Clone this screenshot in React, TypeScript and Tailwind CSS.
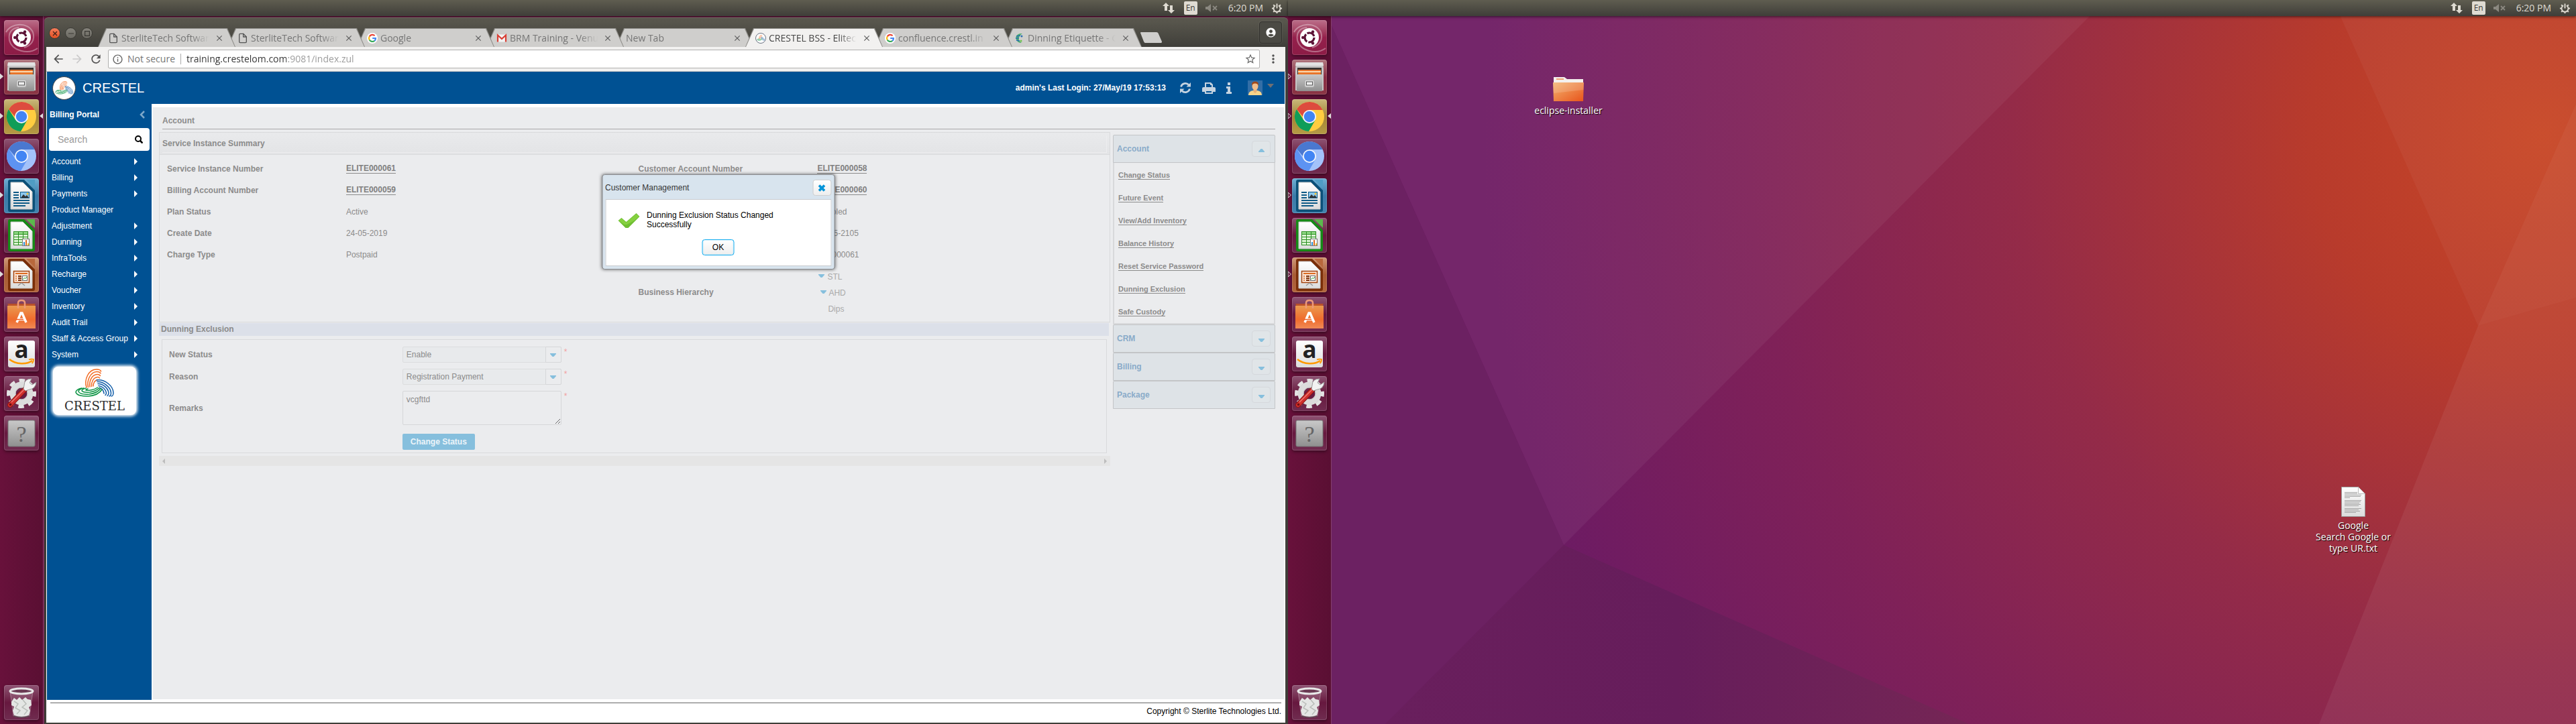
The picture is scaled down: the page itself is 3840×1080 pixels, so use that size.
import React from 'react';
import { FiFile } from 'react-icons/fi';
import {
  MdArrowBack,
  MdArrowForward,
  MdRefresh,
  MdInfoOutline,
  MdStarBorder,
  MdMoreVert,
  MdClose,
  MdAccountCircle,
} from 'react-icons/md';

const UI = "font-['Open_Sans','Noto_Sans',sans-serif]";

/* ---------- logos ---------- */

function CrestelMark({ className }: { className: string }) {
  return (
    <svg viewBox="0 0 58 42" className={className} fill="none" strokeLinecap="round" aria-hidden="true">
      <g stroke="#f26a21" strokeWidth="1.5">
        <path d="M17 28C13 16 20 1 32 1C35 1 38 2 38.500 4" />
        <path d="M19.500 27.500C17 17 23 5 32 4.500C35 4.300 37 5 38 7" />
        <path d="M22 27C20.500 18 25 9 33 8.500C35 8.400 36.500 9 37.500 10.500" />
        <path d="M24.500 26.500C24 20 27 13 33.500 12.500C35 12.400 36 13 36.500 14" />
        <path d="M27 26C27 22 29 17 34 16.500" />
      </g>
      <g stroke="#0f5ca8" strokeWidth="1.5">
        <path d="M32 17C44 15 57 26 57 36C57 39 55.500 41 54 41" />
        <path d="M33 19.500C43 19 53 28 53.500 36C53.500 38.500 52.500 40.500 51 41" />
        <path d="M34 22.500C42 22.500 49 29 50 36C50 38 49.500 39.500 48 40.500" />
        <path d="M35 25.500C41 26 45.500 31 46.500 36C46.500 37.500 46 38.500 45 39.500" />
        <path d="M36.500 28.500C40 29.500 42.500 33 43 37" />
      </g>
      <g stroke="#0c9444" strokeWidth="1.5">
        <path d="M10 29C4 30 1 33 1 35C2 40 12 41.500 20 41C30 40 37 36 40 31" />
        <path d="M13 29C8 30 5 32 5 34C7 38 15 38.500 21 38C29 37 35 34 38 29.500" />
        <path d="M16 29C12 30 10 31 10 33C12 35.500 17 35.500 22 35C28 34 33 32 36 28.500" />
        <path d="M19 30C17 30.500 15.500 31 16 32C19 33 29 31.500 33.500 28" />
      </g>
    </svg>
  );
}

function GoogleG() {
  return (
    <svg viewBox="0 0 16 16" className="size-4 shrink-0" aria-hidden="true">
      <circle cx="8" cy="8" r="8" fill="#fff" />
      <g fill="none" strokeWidth="2.2">
        <path d="M11.600 4.300A5 5 0 0 0 3.700 5.500" stroke="#ea4335" />
        <path d="M3.700 5.500A5 5 0 0 0 3.700 10.500" stroke="#fbbc05" />
        <path d="M3.700 10.500A5 5 0 0 0 11.300 11.800" stroke="#34a853" />
        <path d="M11.300 11.800A5 5 0 0 0 13 8H8.200" stroke="#4285f4" />
      </g>
    </svg>
  );
}

function GmailM() {
  return (
    <svg viewBox="0 0 16 16" className="size-4 shrink-0" aria-hidden="true">
      <rect x="1" y="2.500" width="14" height="11" rx="1" fill="#f3f3f3" />
      <path d="M2 13.500V3.500L8 9L14 3.500V13.500" fill="none" stroke="#d93f35" strokeWidth="2.200" />
    </svg>
  );
}

function CrestelFavicon() {
  return (
    <span className="flex size-4 shrink-0 items-center justify-center rounded-full border border-gray-500 bg-white">
      <CrestelMark className="w-3" />
    </span>
  );
}

function EtiquetteFavicon() {
  return (
    <svg viewBox="0 0 16 16" className="size-4 shrink-0" aria-hidden="true">
      <path d="M12 1C4 0 1 6 3 10C4 13 7 15 11 15C8 13 6 10 7 7C8 4 10 2 12 1Z" fill="#4caf6e" />
      <path d="M3 5L9 4M2 8L7 8M3 11L8 12" stroke="#2a6fb0" strokeWidth="1.500" />
      <circle cx="11" cy="5" r="1.500" fill="#2a6fb0" />
      <circle cx="10" cy="12" r="1.500" fill="#6cc04a" />
    </svg>
  );
}

/* ---------- launcher ---------- */

function LauncherDefs() {
  return (
    <svg className="absolute size-0" aria-hidden="true">
      <defs>
        <linearGradient id="metal" x1="0" y1="0" x2="0" y2="1">
          <stop offset="0" stopColor="#c9c9c9" />
          <stop offset="1" stopColor="#8f8f8f" />
        </linearGradient>
        <linearGradient id="paper" x1="0" y1="0" x2="0" y2="1">
          <stop offset="0" stopColor="#ffffff" />
          <stop offset="1" stopColor="#dcdcdc" />
        </linearGradient>
        <linearGradient id="bag" x1="0" y1="0" x2="0" y2="1">
          <stop offset="0" stopColor="#ea9a50" />
          <stop offset=".6" stopColor="#ef6c2d" />
          <stop offset="1" stopColor="#f08a55" />
        </linearGradient>
        <linearGradient id="folder" x1="0" y1="0" x2="1" y2="1">
          <stop offset="0" stopColor="#f3b470" />
          <stop offset="1" stopColor="#e8541b" />
        </linearGradient>
      </defs>
    </svg>
  );
}

function DashIcon() {
  return (
    <g>
      <path d="M3 18C10 4 36 2 43 18C47 30 40 38 30 41" fill="none" stroke="#fff" strokeOpacity=".35" strokeWidth="2" />
      <path d="M50 42C36 52 12 46 8 30C6 18 12 12 22 11" fill="none" stroke="#fff" strokeOpacity=".35" strokeWidth="2" />
      <circle cx="26" cy="26" r="14" fill="#fff" />
      <circle cx="26" cy="26" r="7" fill="none" stroke="#5b1236" strokeWidth="3.200" strokeDasharray="12.600 2" />
      <g fill="#5b1236">
        <circle cx="16.200" cy="26" r="2.200" />
        <circle cx="31" cy="17.500" r="2.200" />
        <circle cx="31" cy="34.500" r="2.200" />
      </g>
    </g>
  );
}

function FilesIcon() {
  return (
    <g>
      <path d="M6 4H46L47 14V46H5V14Z" fill="#c6c6c6" />
      <path d="M6 4H46L47 9H5Z" fill="#e2e2e2" />
      <rect x="8" y="12" width="36" height="10" fill="#3a3431" />
      <rect x="9" y="15" width="34" height="8" fill="#e8762c" />
      <rect x="9" y="17" width="34" height="2" fill="#fbd9b0" />
      <path d="M7 22H45V47H7Z" fill="url(#metal)" />
      <rect x="19" y="30" width="14" height="11" rx="2" fill="#d9d9d9" stroke="#aaa" />
      <rect x="21.500" y="33" width="9" height="5" fill="#eee" stroke="#555" />
    </g>
  );
}

function ChromeIcon({ blue }: { blue?: boolean }) {
  const [a, b, c] = blue ? ['#4a78d0', '#5d93f2', '#a3c2fa'] : ['#dd4b3e', '#0f9d58', '#ffcd40'];
  return (
    <g>
      <circle cx="26" cy="26" r="22" fill={c} />
      <path d="M45.700 16H26L17 27L7 15A22 22 0 0 1 45.700 16Z" fill={a} />
      <path d="M6.900 15A22 22 0 0 0 25 48L34.700 31L26 36L17.300 31Z" fill={b} />
      <circle cx="26" cy="26" r="10" fill="#f3f6fc" />
      <circle cx="26" cy="26" r="8.200" fill="#4285f4" />
    </g>
  );
}

function DocShell({ dark, light, children }: { dark: string; light: string; children: React.ReactNode }) {
  return (
    <g>
      <path d="M9 2H30L46 18V47Q46 50 43 50H9Q6 50 6 47V5Q6 2 9 2Z" fill={dark} />
      <path d="M33 2H46V15Z" fill={light} />
      <path d="M10 6H28L42 20V46H10Z" fill="url(#paper)" stroke="#c8c8c8" />
      {children}
    </g>
  );
}

function WriterIcon() {
  return (
    <DocShell dark="#0b5078" light="#4f9cc4">
      <path d="M14 21H22M14 25H22M14 29H22M14 33H38M14 37H38M14 41H32" stroke="#0e5a86" strokeWidth="2" />
      <rect x="24.500" y="20.500" width="13" height="9" fill="#8cc8ee" stroke="#0e5a86" />
      <path d="M25 29L29 24L32 27L34 25L37 29Z" fill="#333" />
      <circle cx="35" cy="23" r="1.500" fill="#f2c230" />
    </DocShell>
  );
}

function CalcIcon() {
  return (
    <DocShell dark="#178a17" light="#5bb94c">
      <rect x="14" y="20" width="22" height="21" fill="#2c8f22" />
      <g fill="#ddf5d4">
        <path d="M15 21H21V24H15ZM22 21H28V24H22ZM29 21H35V24H29Z" fill="#8fd884" />
        <path d="M15 25H21V28H15ZM22 25H28V28H22ZM29 25H35V28H29ZM15 29H21V32H15ZM22 29H28V32H22ZM29 29H35V32H29ZM15 33H21V36H15ZM22 33H28V36H22ZM15 37H21V40H15ZM22 37H28V40H22Z" />
      </g>
      <rect x="27.500" y="31.500" width="10" height="10" fill="#fff" stroke="#777" />
      <path d="M29 36H31V41H29Z" fill="#2a8fd4" />
      <path d="M32 33H34V41H32Z" fill="#dc6b20" />
      <path d="M35 38H37V41H35Z" fill="#e9c02c" />
    </DocShell>
  );
}

function ImpressIcon() {
  return (
    <DocShell dark="#7a2e08" light="#b8683c">
      <rect x="14.500" y="20.500" width="23" height="17" fill="#fbe6d8" stroke="#a3430e" strokeWidth="1.500" />
      <path d="M17 24H35" stroke="#dc6b20" strokeWidth="2" />
      <path d="M17 28H19M17 31H19M17 34H19" stroke="#dc6b20" strokeWidth="1.500" />
      <path d="M21 28H26M21 31H26M21 34H26" stroke="#7a2e08" strokeWidth="1.800" />
      <rect x="27.500" y="27.500" width="7" height="7" fill="#fff" stroke="#666" />
      <path d="M28.500 33L30.500 30.500L32 31.500L34 29" fill="none" stroke="#2fa32f" />
      <path d="M26 38L21 42M26 38L31 42" stroke="#999" strokeWidth="1.500" />
    </DocShell>
  );
}

function SoftwareIcon() {
  return (
    <g>
      <path d="M5 10H47L45 14H7Z" fill="#b9512a" />
      <path d="M5 13H47V47H5Z" fill="url(#bag)" />
      <path d="M21 17V9Q21 5 26 5Q31 5 31 9V17" fill="none" stroke="#ee9a78" strokeWidth="2.500" />
      <path d="M19 38L25 24H27L33 38M20 33.500H32" fill="none" stroke="#fff" strokeWidth="3.500" />
      <path d="M18 33.500H29" stroke="#ef5a1d" strokeWidth="1.500" />
    </g>
  );
}

function AmazonIcon() {
  return (
    <g>
      <rect x="6" y="6" width="40" height="40" rx="3" fill="url(#paper)" />
      <text
        x="26"
        y="32"
        textAnchor="middle"
        fontSize="35"
        fontWeight="bold"
        fill="#222"
        className="font-['Open_Sans',sans-serif]"
      >
        a
      </text>
      <path d="M8 34C18 42 34 42 42 36" fill="none" stroke="#ff9900" strokeWidth="2.400" />
      <path d="M37 34.500Q41 33 44 34Q44 38 41.500 40" fill="none" stroke="#ff9900" strokeWidth="1.800" />
    </g>
  );
}

function SettingsIcon() {
  return (
    <g>
      <circle cx="26" cy="26" r="19.500" fill="none" stroke="#e3e3e3" strokeWidth="5" strokeDasharray="8.500 6.810" strokeDashoffset="4" />
      <circle cx="26" cy="26" r="13" fill="none" stroke="#dcdcdc" strokeWidth="9" />
      <circle cx="26" cy="26" r="9" fill="none" stroke="#bdbdbd" />
      <path d="M9 43L31 20" stroke="#8d1515" strokeWidth="8" strokeLinecap="round" />
      <path d="M9 43L31 20" stroke="#cf2f2c" strokeWidth="6" strokeLinecap="round" />
      <path d="M11 39L30 20" stroke="#ef7b74" strokeWidth="1.500" />
      <circle cx="9.500" cy="42.500" r="1.800" fill="#6e0f0f" />
      <path d="M29 19L32 22L38 20Q47 19 48 9L42 13L38 10L41 4Q30 4 30 14Z" fill="#f2f2f2" stroke="#9a9a9a" />
    </g>
  );
}

function HelpIcon() {
  return (
    <g>
      <rect x="6" y="7" width="40" height="39" rx="2" fill="url(#metal)" stroke="#777" />
      <text x="26" y="39" textAnchor="middle" fontSize="34" fill="#666" className="font-['Liberation_Serif',serif]">
        ?
      </text>
    </g>
  );
}

function TrashIcon() {
  return (
    <g>
      <path d="M9 9L14 46Q26 50 38 46L43 9Z" fill="#fff" fillOpacity=".15" stroke="#fff" strokeOpacity=".3" />
      <path d="M11 25L15 19L19 22L23 18L27 22L32 18L35 21L40 22L41 30L37 33L39 38L37 45Q26 49 15 45L13 38L15 32L11 30Z" fill="#e4e6e4" />
      <path d="M15 24L21 28L17 34L24 38L19 43M28 22L33 28L27 33L35 38L30 44" fill="none" stroke="#b9bdb9" strokeWidth="1.500" />
      <ellipse cx="26" cy="9" rx="17" ry="4" fill="#6b3a53" stroke="#e8e8e8" strokeWidth="3" />
      <path d="M14 46Q26 50 38 46" fill="none" stroke="#4a4a4a" />
    </g>
  );
}

type App = { name: string; icon: React.ReactNode; tile: string; running?: boolean; active?: boolean };

const PLAIN = 'bg-linear-to-b from-[#8e5474] via-[#67183f] to-[#702c50]';

const APPS: App[] = [
  { name: 'Search your computer', icon: <DashIcon />, tile: 'bg-linear-to-b from-[#bb6e8a] via-[#95204c] to-[#8c1c46]' },
  { name: 'Files', icon: <FilesIcon />, tile: 'bg-linear-to-b from-[#b07880] via-[#8a2c44] to-[#8a3544]', running: true },
  { name: 'Google Chrome', icon: <ChromeIcon />, tile: 'bg-linear-to-b from-[#c9b87a] via-[#a38634] to-[#b69a45]', running: true, active: true },
  { name: 'Chromium', icon: <ChromeIcon blue />, tile: PLAIN },
  { name: 'LibreOffice Writer', icon: <WriterIcon />, tile: 'bg-linear-to-b from-[#6fb0d4] via-[#3b7ba8] to-[#4383af]', running: true },
  { name: 'LibreOffice Calc', icon: <CalcIcon />, tile: PLAIN },
  { name: 'LibreOffice Impress', icon: <ImpressIcon />, tile: 'bg-linear-to-b from-[#d09a78] via-[#a85c34] to-[#b2663c]', running: true },
  { name: 'Ubuntu Software', icon: <SoftwareIcon />, tile: PLAIN },
  { name: 'Amazon', icon: <AmazonIcon />, tile: PLAIN },
  { name: 'System Settings', icon: <SettingsIcon />, tile: PLAIN },
  { name: 'Help', icon: <HelpIcon />, tile: PLAIN },
];

function Tile({ app, hollow }: { app: App; hollow?: boolean }) {
  return (
    <div className="relative px-1.5">
      <button
        type="button"
        aria-label={app.name}
        className={`block size-[52px] rounded-sm shadow-[0_2px_4px_rgba(0,0,0,0.4)] ring-1 ring-white/15 ring-inset ${app.tile}`}
      >
        <svg viewBox="0 0 52 52" className="size-full overflow-visible">
          {app.icon}
        </svg>
      </button>
      {app.running && (
        <svg viewBox="0 0 6 10" className="absolute top-5 left-0 h-2.5 w-1.5" aria-hidden="true">
          <path d="M0 1L4.500 5L0 9Z" fill={hollow ? 'none' : '#ddd'} stroke="#ddd" />
        </svg>
      )}
      {app.active && (
        <svg viewBox="0 0 6 10" className="absolute top-5 right-0 h-2.5 w-1.5" aria-hidden="true">
          <path d="M6 1L1 5L6 9Z" fill="#ddd" />
        </svg>
      )}
    </div>
  );
}

function Launcher({ hollow }: { hollow?: boolean }) {
  return (
    <nav
      aria-label="Launcher"
      className="flex w-[65px] shrink-0 flex-col justify-between border-r border-[#84406c] bg-linear-to-r from-[#68113b] to-[#5a0f33] pt-1.5 pb-1.5"
    >
      <div className="flex flex-col gap-[7px]">
        {APPS.map((a) => (
          <Tile key={a.name} app={a} hollow={hollow} />
        ))}
      </div>
      <Tile app={{ name: 'Trash', icon: <TrashIcon />, tile: PLAIN }} />
    </nav>
  );
}

function Panel() {
  return (
    <header className="relative z-10 flex h-6 shrink-0 items-center justify-end bg-linear-to-b from-[#5f5d50] to-[#3f3e39] pr-2 text-[#dfdbd2] shadow-[0_1px_4px_rgba(0,0,0,0.6)]">
      <svg viewBox="0 0 18 18" className="mr-3.5 size-[18px]" fill="currentColor" aria-label="Network">
        <path d="M5 1L10 6H7V13H3V6H0Z" />
        <path d="M13 17L8 12H11V5H15V12H18Z" />
      </svg>
      <span className={`mr-3 flex h-5 w-5 items-center justify-center rounded-xs bg-[#dfdbd2] text-xs text-[#3c3b37] ${UI}`}>En</span>
      <svg viewBox="0 0 18 12" className="mr-4 h-3 w-[18px] text-[#8b8880]" fill="currentColor" aria-label="Muted">
        <path d="M0 4H3L8 0V12L3 8H0Z" />
        <path d="M11 3L17 9M17 3L11 9" stroke="currentColor" strokeWidth="1.800" />
      </svg>
      <time className={`mr-3 text-sm leading-6 ${UI}`}>6:20 PM</time>
      <svg viewBox="0 0 18 18" className="size-[17px]" fill="none" stroke="currentColor" aria-label="Session">
        <path d="M6.500 4.500A5.300 5.300 0 1 0 11.500 4.500" strokeWidth="2" />
        <path d="M9 1.500V9" strokeWidth="2" />
        <path d="M1 9H3.500M14.500 9H17M3.300 3.300L5 5M14.700 3.300L13 5M3.300 14.700L5 13M14.700 14.700L13 13M9 14.500V17" strokeWidth="2" />
      </svg>
    </header>
  );
}

/* ---------- browser ---------- */

const TABS = [
  { title: 'SterliteTech Software', icon: <FiFile className="size-4 shrink-0 text-[#555]" /> },
  { title: 'SterliteTech Software', icon: <FiFile className="size-4 shrink-0 text-[#555]" /> },
  { title: 'Google', icon: <GoogleG /> },
  { title: 'BRM Training - Venue', icon: <GmailM /> },
  { title: 'New Tab', icon: null },
  { title: 'CRESTEL BSS - Elitecore', icon: <CrestelFavicon />, active: true },
  { title: 'confluence.crestl.in', icon: <GoogleG /> },
  { title: 'Dinning Etiquette - G', icon: <EtiquetteFavicon /> },
];

const SLANT = '[clip-path:polygon(12px_0,calc(100%-12px)_0,100%_100%,0_100%)]';
const STACK = ['z-[8]', 'z-[7]', 'z-[6]', 'z-[5]', 'z-[4]', 'z-[9]', 'z-[2]', 'z-[1]'];

function TabStrip() {
  return (
    <div className="flex h-11 items-end pl-[7px]">
      <WindowButtons />
      <div role="tablist" className="relative isolate flex">
        {TABS.map((t, i) => (
          <div key={i} className={`relative -mr-3 h-7 w-[205px] bg-[#8d8c88] ${SLANT} ${STACK[i]}`}>
            <div
              className={`absolute inset-x-px top-px bottom-0 flex items-center pr-4 pl-3.5 ${SLANT} ${
                t.active ? 'bg-[#f2f1f0]' : 'bg-[#cfcecc]'
              }`}
            >
              {t.icon}
              <button
                type="button"
                role="tab"
                aria-selected={!!t.active}
                className={`min-w-0 flex-1 overflow-hidden text-left text-sm whitespace-nowrap [mask-image:linear-gradient(90deg,#000_80%,transparent)] ${
                  t.icon ? 'ml-1' : ''
                } ${t.active ? 'text-[#454545]' : 'text-[#757575]'} ${UI}`}
              >
                {t.title}
              </button>
              <button type="button" aria-label={`Close ${t.title}`} className="ml-2 text-[#5c5c5c]">
                <MdClose className="size-3.5" />
              </button>
            </div>
          </div>
        ))}
      </div>
      <button type="button" aria-label="New tab" className="mb-1.5 ml-2.5 h-4">
        <svg viewBox="0 0 32 16" className="h-4 w-8">
          <path d="M0 1Q0 0 1 0H24Q26 0 26.500 1.500L32 14Q32 16 31 16H7Q6 16 5 14Z" fill="#cfcecc" />
        </svg>
      </button>
      <button
        type="button"
        aria-label="Profile"
        className="mr-[9px] mb-[5px] ml-auto flex h-[33px] w-[34px] items-center justify-center rounded-sm border border-[#33322e] bg-[#4b4a44] text-white shadow-[0_0_0_1px_rgba(255,255,255,0.06)]"
      >
        <MdAccountCircle className="size-[17px]" />
      </button>
    </div>
  );
}

function WindowButtons() {
  const base = 'flex size-[17px] items-center justify-center rounded-full border border-[#3a3934]';
  return (
    <div className="mb-3 flex w-[73px] shrink-0 gap-[7px]">
      <button type="button" aria-label="Close window" className={`${base} bg-linear-to-b from-[#f47d5a] to-[#e2501f]`}>
        <svg viewBox="0 0 8 8" className="size-2" stroke="#3a2018" strokeWidth="1.200">
          <path d="M1 1L7 7M7 1L1 7" />
        </svg>
      </button>
      <button type="button" aria-label="Minimize" className={`${base} bg-linear-to-b from-[#85837b] to-[#6b6962]`}>
        <svg viewBox="0 0 8 8" className="size-2" stroke="#3a3934" strokeWidth="1">
          <path d="M0 4H8" />
        </svg>
      </button>
      <button type="button" aria-label="Maximize" className={`${base} bg-linear-to-b from-[#85837b] to-[#6b6962]`}>
        <svg viewBox="0 0 8 8" className="size-2" stroke="#3a3934" strokeWidth="1.200" fill="none">
          <path d="M.6 .6H7.400V7.400H.6Z" />
        </svg>
      </button>
    </div>
  );
}

function Toolbar() {
  return (
    <div className={`flex h-[37px] items-center border-b border-[#c4c4c4] bg-[#f2f1f0] px-2 text-sm ${UI}`}>
      <button type="button" aria-label="Back" className="text-[#505050]">
        <MdArrowBack className="size-5" />
      </button>
      <button type="button" aria-label="Forward" className="ml-2 text-[#cbcaca]">
        <MdArrowForward className="size-5" />
      </button>
      <button type="button" aria-label="Reload" className="ml-2 text-[#505050]">
        <MdRefresh className="size-5" />
      </button>
      <div className="ml-2 flex h-7 flex-1 items-center rounded-xs border border-[#b0afae] bg-white px-1">
        <MdInfoOutline className="ml-px size-[17px] text-[#666]" />
        <span className="ml-1.5 text-[#757575]">Not secure</span>
        <span className="mx-2 h-4 w-px bg-[#aaa]" />
        <input
          aria-label="Address"
          defaultValue="training.crestelom.com:9081/index.zul"
          className="min-w-0 flex-1 bg-[linear-gradient(90deg,#333_149px,#999_149px)] bg-clip-text text-transparent outline-none"
        />
        <button type="button" aria-label="Bookmark" className="text-[#666]">
          <MdStarBorder className="size-[18px]" />
        </button>
      </div>
      <button type="button" aria-label="Menu" className="ml-2.5 text-[#505050]">
        <MdMoreVert className="size-5" />
      </button>
    </div>
  );
}

/* ---------- web application ---------- */

function AppHeader() {
  return (
    <div className="flex h-12 items-center bg-[#005193] pl-2 text-white">
      <span className="flex size-[35px] items-center justify-center rounded-full border border-[#444] bg-white">
        <CrestelMark className="w-[27px]" />
      </span>
      <span className="ml-2.5 text-xl">CRESTEL</span>
      <span className="ml-auto text-xs font-bold">admin's Last Login: 27/May/19 17:53:13</span>
      <button type="button" aria-label="Refresh" className="ml-5 text-[#c5d3e0]">
        <svg viewBox="0 0 18 18" className="size-[18px]" fill="none" stroke="currentColor" strokeWidth="2.800">
          <path d="M2.500 7.500A6.800 6.800 0 0 1 14 4.500" />
          <path d="M15.500 10.500A6.800 6.800 0 0 1 4 13.500" />
          <path d="M17 1V7.500H10.500ZM1 17V10.500H7.500Z" fill="currentColor" stroke="none" />
        </svg>
      </button>
      <button type="button" aria-label="Print" className="ml-4 text-[#c5d3e0]">
        <svg viewBox="0 0 20 18" className="h-[18px] w-5" fill="currentColor">
          <path d="M4 9V1H13L16 4V9H14V5H12V3H6V9Z" />
          <path d="M0 10Q0 8 2 8H18Q20 8 20 10V15H16V12H4V15H0Z" />
          <path d="M4 12H16V18H4ZM6 14V16H14V14Z" fillRule="evenodd" />
        </svg>
      </button>
      <button type="button" aria-label="Information" className="ml-4 text-[#c5d3e0]">
        <svg viewBox="0 0 8 17" className="h-[17px] w-2" fill="currentColor">
          <path d="M2 0H6V4H2ZM0 6H6V14H8V17H0V14H2V9H0Z" />
        </svg>
      </button>
      <button type="button" aria-label="User" className="ml-6 flex items-center">
        <svg viewBox="0 0 22 22" className="size-[22px]">
          <rect width="22" height="22" fill="#336ea6" />
          <path d="M1 22Q1 16 8 15H14Q21 16 21 22Z" fill="#f7d58a" />
          <path d="M8.500 12H13.500V17L11 19L8.500 17Z" fill="#eab077" />
          <ellipse cx="11" cy="8.500" rx="4.500" ry="6" fill="#f2be8a" />
          <path d="M6 8Q5 1.500 11 1.500Q17 1.500 16 8Q15 4.500 11 4.500Q7 4.500 6 8Z" fill="#a04a1c" />
        </svg>
        <svg viewBox="0 0 10 6" className="mr-4 mb-1.5 ml-[7px] h-1.5 w-2.5">
          <path d="M0 0H10L5 6Z" fill="#6f6f73" />
        </svg>
      </button>
    </div>
  );
}

const MENU = [
  'Account',
  'Billing',
  'Payments',
  'Product Manager',
  'Adjustment',
  'Dunning',
  'InfraTools',
  'Recharge',
  'Voucher',
  'Inventory',
  'Audit Trail',
  'Staff & Access Group',
  'System',
];

function Sidebar() {
  return (
    <aside className="w-[156px] shrink-0 bg-[#005193] text-xs text-white">
      <div className="flex h-8 items-center justify-between pr-2.5 pl-1 font-bold">
        Billing Portal
        <button type="button" aria-label="Collapse menu">
          <svg viewBox="0 0 8 12" className="h-3 w-2" fill="none" stroke="#7ea8c9" strokeWidth="2.500">
            <path d="M7 1L2 6L7 11" />
          </svg>
        </button>
      </div>
      <label className="mx-[3px] mt-1 flex h-[34px] items-center rounded-sm bg-white pr-2.5 pl-[13px]">
        <input aria-label="Search" placeholder="Search" className="w-full min-w-0 text-sm outline-none placeholder:text-[#999]" />
        <svg viewBox="0 0 12 12" className="size-3 shrink-0" fill="none" stroke="#000" strokeWidth="2" aria-hidden="true">
          <circle cx="5" cy="5" r="4" />
          <path d="M8 8L11.500 11.500" strokeWidth="2.500" />
        </svg>
      </label>
      <ul className="mt-1">
        {MENU.map((m) => (
          <li key={m}>
            <a href="#" className="flex h-6 items-center justify-between pr-[21px] pl-[7px] whitespace-nowrap">
              {m}
              {m !== 'Product Manager' && (
                <svg viewBox="0 0 5 10" className="h-2.5 w-[5px] shrink-0" aria-hidden="true">
                  <path d="M0 0L5 5L0 10Z" fill="#fff" />
                </svg>
              )}
            </a>
          </li>
        ))}
      </ul>
      <div className="mt-1.5 ml-[9px] flex h-[72px] w-[124px] flex-col items-center rounded-lg bg-white pt-[3px] shadow-[0_0_4px_2px_#fff]">
        <CrestelMark className="h-[42px] w-[58px]" />
        <span className="mt-1 font-['DejaVu_Serif',serif] text-lg leading-5 text-[#2b2b2b]">CRESTEL</span>
      </div>
    </aside>
  );
}

const ROWS: { l: string; v: string; l2?: string; v2: string; link?: boolean }[] = [
  { l: 'Service Instance Number', v: 'ELITE000061', l2: 'Customer Account Number', v2: 'ELITE000058', link: true },
  { l: 'Billing Account Number', v: 'ELITE000059', v2: 'ELITE000060', link: true },
  { l: 'Plan Status', v: 'Active', v2: 'Enabled' },
  { l: 'Create Date', v: '24-05-2019', v2: '24-05-2105' },
  { l: 'Charge Type', v: 'Postpaid', v2: 'elite000061' },
];

function Value({ text, link }: { text: string; link?: boolean }) {
  return link ? (
    <a href="#" className="border-b border-[#8b8b8b] leading-[13px] font-bold text-[#808080]">
      {text}
    </a>
  ) : (
    <>{text}</>
  );
}

function Down({ className }: { className: string }) {
  return (
    <svg viewBox="0 0 9 5" className={className} aria-hidden="true">
      <path d="M0 0H9V1L5.500 5H3.500L0 1Z" fill="#86bfdd" />
    </svg>
  );
}

function Summary() {
  return (
    <section className="border border-[#d9dadc]">
      <h2 className="h-[33px] border-b border-[#d9dadc] bg-linear-to-b from-[#e9eaec] to-[#e3e4e6] pt-1 pr-1 pl-1">
        <span className="block h-[26px] border-r border-b border-[#ededef] leading-6 font-bold">Service Instance Summary</span>
      </h2>
      <dl className="grid grid-cols-[19fr_31fr_19fr_31fr] pt-[5px] pl-[11px]">
        {ROWS.map((r) => (
          <React.Fragment key={r.l}>
            <dt className="flex h-8 items-center font-bold">{r.l}</dt>
            <dd className="flex h-8 items-center">
              <Value text={r.v} link={r.link} />
            </dd>
            <dt className="flex h-8 items-center font-bold">{r.l2}</dt>
            <dd className="flex h-8 items-center">
              <Value text={r.v2} link={r.link} />
            </dd>
          </React.Fragment>
        ))}
        <dt className="col-start-3 flex h-20 items-center font-bold">Business Hierarchy</dt>
        <dd className="pt-[5px] pb-[7px] leading-6 text-[#a9a9a9]">
          <div className="flex items-center gap-1 pl-0.5">
            <Down className="mb-1 h-[5px] w-[9px]" />
            STL
          </div>
          <div className="flex items-center gap-[3px] pl-[5px]">
            <Down className="mb-1 h-[5px] w-[9px]" />
            AHD
          </div>
          <div className="pl-4">Dips</div>
        </dd>
      </dl>
    </section>
  );
}

function Required() {
  return <span className="ml-1 text-[#f2a0a0]">*</span>;
}

function Picker({ id, value }: { id: string; value: string }) {
  return (
    <div className="relative flex w-[237px]">
      <select id={id} defaultValue={value} className="h-6 w-full appearance-none rounded-xs border border-[#dcddde] bg-[#e8eaec] pr-7 pl-[5px]">
        <option>{value}</option>
      </select>
      <span className="pointer-events-none absolute inset-y-0 right-0 flex w-6 items-center justify-center rounded-r-xs border border-[#d6d7d9] bg-[#ebecee]">
        <Down className="h-[5px] w-[9px]" />
      </span>
    </div>
  );
}

function ExclusionForm() {
  return (
    <section className="mt-px">
      <h2 className="mr-0.5 h-[19px] bg-[#dce0e9] pl-[3px] leading-[19px] font-bold">Dunning Exclusion</h2>
      <form className="mt-[5px] mr-[5px] ml-1 border border-[#d9dadc] pt-2.5 pb-1 pl-2.5" onSubmit={(e) => e.preventDefault()}>
        <div className="grid grid-cols-[249fr_751fr] gap-y-[9px]">
          <label htmlFor="status" className="pt-1 leading-4 font-bold">
            New Status
          </label>
          <div className="flex">
            <Picker id="status" value="Enable" />
            <Required />
          </div>
          <label htmlFor="reason" className="pt-1 leading-4 font-bold">
            Reason
          </label>
          <div className="flex">
            <Picker id="reason" value="Registration Payment" />
            <Required />
          </div>
          <label htmlFor="remarks" className="self-center leading-4 font-bold">
            Remarks
          </label>
          <div className="flex">
            <textarea id="remarks" defaultValue="vcgfttd" className="h-[51px] w-[237px] rounded-xs border border-[#d6d7d9] px-[5px] pt-1 leading-4" />
            <Required />
          </div>
          <button type="submit" className="col-start-2 mt-1 h-6 w-[108px] rounded-xs bg-[#86bfdd] font-bold text-[#ecf4f9]">
            Change Status
          </button>
        </div>
      </form>
      <div className="mt-1 flex h-[15px] items-center justify-between bg-[#e5e5e5] px-[5px]">
        <svg viewBox="0 0 4 8" className="h-2 w-1" aria-hidden="true">
          <path d="M4 0L0 4L4 8Z" fill="#bdbdbd" />
        </svg>
        <svg viewBox="0 0 4 8" className="h-2 w-1" aria-hidden="true">
          <path d="M0 0L4 4L0 8Z" fill="#bdbdbd" />
        </svg>
      </div>
    </section>
  );
}

const LINKS = ['Change Status', 'Future Event', 'View/Add Inventory', 'Balance History', 'Reset Service Password', 'Dunning Exclusion', 'Safe Custody'];

function AccordionHead({ title, open }: { title: string; open?: boolean }) {
  return (
    <h3 className="flex h-[42px] items-center justify-between rounded-t-xs border border-[#c3c5c7] bg-[#dee3e7] pr-1.5 pl-[5px] font-bold text-[#8aabc9]">
      {title}
      <button type="button" aria-label={`Toggle ${title}`} className="flex h-6 w-7 items-center justify-center rounded-sm border border-[#d5d8dc] bg-[#e0e5e8] pt-1">
        <Down className={open ? 'h-[5px] w-[9px] rotate-180' : 'h-[5px] w-[9px]'} />
      </button>
    </h3>
  );
}

function Accordion() {
  return (
    <aside className="mt-1 w-[242px] shrink-0">
      <AccordionHead title="Account" open />
      <ul className="border-2 border-t-0 border-[#d8d9db] pt-px pl-1.5">
        {LINKS.map((l) => (
          <li key={l} className="flex h-[34px] items-center text-[11px] font-bold">
            <a href="#" className="border-b border-[#8b8b8b] leading-3">
              {l}
            </a>
          </li>
        ))}
      </ul>
      <AccordionHead title="CRM" />
      <AccordionHead title="Billing" />
      <AccordionHead title="Package" />
    </aside>
  );
}

function Dialog() {
  return (
    <div
      role="dialog"
      aria-labelledby="dialog-title"
      className="absolute top-[105px] left-1/2 w-[347px] -translate-x-1/2 rounded-sm border border-[#8a8c90] bg-[#d8e4ee] px-1 pb-1 shadow-[0_0_5px_rgba(0,0,0,0.6)]"
    >
      <div className="flex h-9 items-center justify-between pt-0.5">
        <h2 id="dialog-title" className="text-[#363636]">
          Customer Management
        </h2>
        <button type="button" aria-label="Close" className="flex h-6 w-7 items-center justify-center rounded-sm border border-[#cfcfcf] bg-linear-to-b from-white to-[#eee]">
          <svg viewBox="0 0 11 11" className="size-[11px]" stroke="#0093d8" strokeWidth="3.800">
            <path d="M1.500 1.500L9.500 9.500M9.500 1.500L1.500 9.500" />
          </svg>
        </button>
      </div>
      <div className="border border-[#c9ccd0] bg-white px-4 pt-4 pb-[15px] text-black">
        <div className="flex items-center">
          <svg viewBox="0 0 32 22" className="mt-0.5 ml-0.5 h-[22px] w-8" aria-hidden="true">
            <path d="M0 11L5 7L12 13L27 0L32 5L15 22H11Z" fill="#6fbe33" />
            <path d="M1 11L5 8L12 14L27 1L31 5L24 11L13 17L9 17Z" fill="#8fd844" fillOpacity=".7" />
          </svg>
          <p className="ml-[11px] w-52 leading-[14px]">Dunning Exclusion Status Changed Successfully</p>
        </div>
        <button
          type="button"
          className="mx-auto mt-[15px] block h-6 w-12 rounded-sm border border-[#14adf0] bg-linear-to-b from-white to-[#eee] shadow-[inset_0_0_2px_#9fdcf8]"
        >
          OK
        </button>
      </div>
    </div>
  );
}

function BrowserWindow() {
  return (
    <section
      aria-label="CRESTEL BSS"
      className="mt-0.5 ml-px flex min-w-0 flex-1 flex-col rounded-t-md border-t border-[#86847a] bg-linear-to-b from-[#5b594f] to-[#3f3e39] to-[44px]"
    >
      <div className="-mt-px">
        <TabStrip />
      </div>
      <div className="mr-1 mb-0.5 ml-[3px] flex flex-1 flex-col bg-white">
        <Toolbar />
        <div className="flex flex-1 flex-col px-px font-['Liberation_Sans',Arial,sans-serif]">
          <AppHeader />
          <div className="flex flex-1">
            <Sidebar />
            <main className="relative flex-1 pt-[5px] pr-px pb-px pl-0.5 text-xs text-[#8b8b8b]">
              <div className="h-full bg-[#ebecee] pr-[13px] pl-[9px]">
                <h1 className="ml-[5px] h-[33px] border-b border-[#a8a8a8] pt-2 leading-6 font-bold">Account</h1>
                <div className="mt-1 flex gap-1">
                  <div className="min-w-0 flex-1">
                    <Summary />
                    <ExclusionForm />
                  </div>
                  <Accordion />
                </div>
              </div>
              <Dialog />
            </main>
          </div>
          <footer className="mt-1 mr-[5px] ml-[5px] h-[30px] border-t border-[#666] pt-0.5 text-right text-xs leading-5 text-black">
            Copyright © Sterlite Technologies Ltd.
          </footer>
        </div>
      </div>
    </section>
  );
}

/* ---------- desktop ---------- */

function Wallpaper() {
  return (
    <svg viewBox="0 0 1920 1080" preserveAspectRatio="none" className="absolute inset-0 size-full" aria-hidden="true">
      <defs>
        <radialGradient id="glow" gradientUnits="userSpaceOnUse" cx="1870" cy="200" r="1580">
          <stop offset="0" stopColor="#c84726" />
          <stop offset=".22" stopColor="#b83b2c" />
          <stop offset=".5" stopColor="#942b48" />
          <stop offset=".75" stopColor="#7f2158" />
          <stop offset="1" stopColor="#6d1b63" />
        </radialGradient>
        <linearGradient id="floor" x1="0" y1="0" x2="1" y2="0">
          <stop offset="0" stopColor="#691f5d" />
          <stop offset=".5" stopColor="#661d5b" />
          <stop offset="1" stopColor="#752655" />
        </linearGradient>
      </defs>
      <rect width="1920" height="1080" fill="url(#glow)" />
      <path d="M48 0H1219L411 813Z" fill="#fff" fillOpacity=".05" />
      <path d="M0 0H48L411 813L145 1080H0Z" fill="#6c2162" />
      <path d="M145 1080L411 813L1015 1080Z" fill="url(#floor)" />
      <path d="M1558 0H1920V155L1774 486Z" fill="#fff" fillOpacity=".04" />
      <path d="M1920 155V444L1774 486Z" fill="#fff" fillOpacity=".08" />
      <path d="M1774 486L1920 444V1080H1537Z" fill="#fff" fillOpacity=".06" />
    </svg>
  );
}

const ICON_LABEL = `text-center text-sm leading-[17px] text-white [text-shadow:1px_1px_1px_#000] ${UI}`;

export default function App() {
  return (
    <div className="flex min-h-screen">
      <LauncherDefs />
      <div className="flex min-w-0 flex-1 flex-col bg-[#6d1b44]">
        <Panel />
        <div className="flex flex-1">
          <Launcher />
          <BrowserWindow />
        </div>
      </div>
      <div className="relative flex min-w-0 flex-1 flex-col">
        <Wallpaper />
        <Panel />
        <div className="relative flex flex-1">
          <Launcher hollow />
          <div className="relative flex-1">
            <figure className="absolute top-[90px] left-[289px] flex w-32 flex-col items-center">
              <svg viewBox="0 0 46 38" className="h-[38px] w-[46px]" aria-hidden="true">
                <path d="M1 1H17L21 4H45V12H1Z" fill="#f4f1ee" />
                <path d="M5 4H16" stroke="#ee8a4a" strokeWidth="1.500" />
                <path d="M0 9H46L45 37H1Z" fill="url(#folder)" />
                <path d="M0 9H46L45.500 20L1 25Z" fill="#fff" fillOpacity=".15" />
              </svg>
              <figcaption className={`mt-1 ${ICON_LABEL}`}>eclipse-installer</figcaption>
            </figure>
            <figure className="absolute top-[702px] right-[268px] flex w-32 flex-col items-center">
              <svg viewBox="0 0 36 45" className="h-[45px] w-9" aria-hidden="true">
                <path d="M.5 .5H25.500L35.500 10.500V44.500H.5Z" fill="url(#paper)" stroke="#999" />
                <path d="M25.500 .5V10.500H35.500Z" fill="#fff" stroke="#bbb" />
                <path
                  d="M5 8.500H24M5 10.500H24M5 12.500H30M5 14.500H29M5 16.500H13M5 20.500H30M5 22.500H29M5 24.500H27M5 26.500H29M5 28.500H26M5 32.500H30M5 34.500H26M5 36.500H28M5 38.500H22"
                  stroke="#a5a5a5"
                />
              </svg>
              <figcaption className={`mt-1 ${ICON_LABEL}`}>
                Google
                <br />
                Search Google or
                <br />
                type UR.txt
              </figcaption>
            </figure>
          </div>
        </div>
      </div>
    </div>
  );
}
